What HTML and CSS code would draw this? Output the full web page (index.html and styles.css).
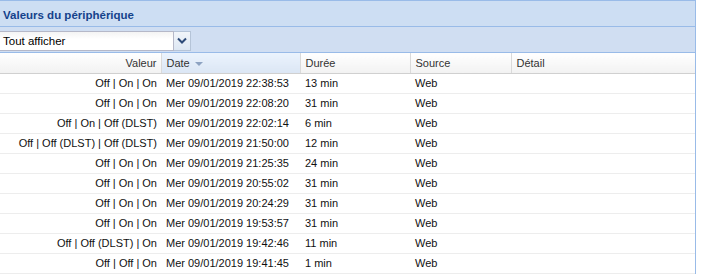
FILE: index.html
```html
<!DOCTYPE html>
<html lang="fr">
<head>
<meta charset="utf-8">
<title>Valeurs du périphérique</title>
<link rel="stylesheet" href="styles.css">
</head>
<body>
<div class="panel">
  <div class="panel-title">Valeurs du périphérique</div>
  <div class="toolbar">
    <div class="combo">
      <div class="combo-input">Tout afficher</div>
      <div class="combo-btn">
        <svg width="10" height="7" viewBox="0 0 10 7"><path d="M1 1.5 L5 5.5 L9 1.5" fill="none" stroke="#2d4a78" stroke-width="2"/></svg>
      </div>
    </div>
  </div>
  <table class="grid">
    <colgroup>
      <col class="c-val"><col class="c-date"><col class="c-dur"><col class="c-src"><col>
    </colgroup>
    <thead>
      <tr>
        <th class="right">Valeur</th>
        <th class="sorted">Date <span class="sort-arrow"></span></th>
        <th>Durée</th>
        <th>Source</th>
        <th>Détail</th>
      </tr>
    </thead>
    <tbody>
      <tr><td class="right">Off | On | On</td><td>Mer 09/01/2019 22:38:53</td><td>13 min</td><td>Web</td><td></td></tr>
      <tr><td class="right">Off | On | On</td><td>Mer 09/01/2019 22:08:20</td><td>31 min</td><td>Web</td><td></td></tr>
      <tr><td class="right">Off | On | Off (DLST)</td><td>Mer 09/01/2019 22:02:14</td><td>6 min</td><td>Web</td><td></td></tr>
      <tr><td class="right">Off | Off (DLST) | Off (DLST)</td><td>Mer 09/01/2019 21:50:00</td><td>12 min</td><td>Web</td><td></td></tr>
      <tr><td class="right">Off | On | On</td><td>Mer 09/01/2019 21:25:35</td><td>24 min</td><td>Web</td><td></td></tr>
      <tr><td class="right">Off | On | On</td><td>Mer 09/01/2019 20:55:02</td><td>31 min</td><td>Web</td><td></td></tr>
      <tr><td class="right">Off | On | On</td><td>Mer 09/01/2019 20:24:29</td><td>31 min</td><td>Web</td><td></td></tr>
      <tr><td class="right">Off | On | On</td><td>Mer 09/01/2019 19:53:57</td><td>31 min</td><td>Web</td><td></td></tr>
      <tr><td class="right">Off | Off (DLST) | On</td><td>Mer 09/01/2019 19:42:46</td><td>11 min</td><td>Web</td><td></td></tr>
      <tr><td class="right">Off | Off | On</td><td>Mer 09/01/2019 19:41:45</td><td>1 min</td><td>Web</td><td></td></tr>
    </tbody>
  </table>
</div>
</body>
</html>
```
FILE: styles.css
```css
html, body {
  margin: 0;
  padding: 0;
  background: #ffffff;
}

body {
  font-family: "Liberation Sans", Arial, sans-serif;
  font-size: 11px;
  color: #000;
}

.panel {
  width: 695px;
  border-top: 1px solid #99bbe8;
  border-right: 1px solid #99bbe8;
  overflow: hidden;
}

.panel-title {
  height: 22px;
  padding-top: 3px;
  line-height: 22px;
  padding-left: 3px;
  background: #cddef3;
  border-bottom: 1px solid #99bbe8;
  color: #15428b;
  font-weight: bold;
  font-size: 11.5px;
}

.toolbar {
  height: 25px;
  background: #d0def2;
  border-bottom: 1px solid #99bbe8;
  display: flex;
  align-items: center;
}

.combo {
  display: flex;
  height: 20px;
  margin-top: 2px;
}

.combo-input {
  width: 170px;
  height: 18px;
  line-height: 19px;
  padding-left: 3px;
  background: linear-gradient(#f4f4f4, #ffffff 40%);
  border: 1px solid #b5b8c8;
  border-left: none;
  font-size: 11.5px;
}

.combo-btn {
  width: 16px;
  height: 18px;
  border: 1px solid #b5c4d8;
  border-left: none;
  background: linear-gradient(#f1f5fa, #dde7f3);
  display: flex;
  align-items: center;
  justify-content: center;
}

.grid {
  width: 695px;
  border-collapse: collapse;
  table-layout: fixed;
}

.c-val { width: 161px; }
.c-date { width: 139px; }
.c-dur { width: 110px; }
.c-src { width: 101px; }

.grid th {
  height: 20px;
  line-height: 20px;
  padding: 0 5px;
  font-weight: normal;
  text-align: left;
  color: #333;
  background: linear-gradient(#ffffff, #f2f2f2);
  border-bottom: 1px solid #d0d0d0;
  border-left: 1px solid #dadada;
  white-space: nowrap;
}

.grid th:first-child {
  border-left: none;
}

.grid th.sorted {
  background: linear-gradient(#ebf3fd, #dbe6f4);
}

.sort-arrow {
  display: inline-block;
  width: 0;
  height: 0;
  margin-left: 2px;
  vertical-align: 1px;
  border-left: 4px solid transparent;
  border-right: 4px solid transparent;
  border-top: 4px solid #8ea3c2;
}

.grid td {
  height: 19px;
  line-height: 19px;
  padding: 0 5px;
  border-bottom: 1px solid #ededed;
  white-space: nowrap;
  color: #111;
}

.grid .right {
  text-align: right;
  padding-right: 4px;
}
```
